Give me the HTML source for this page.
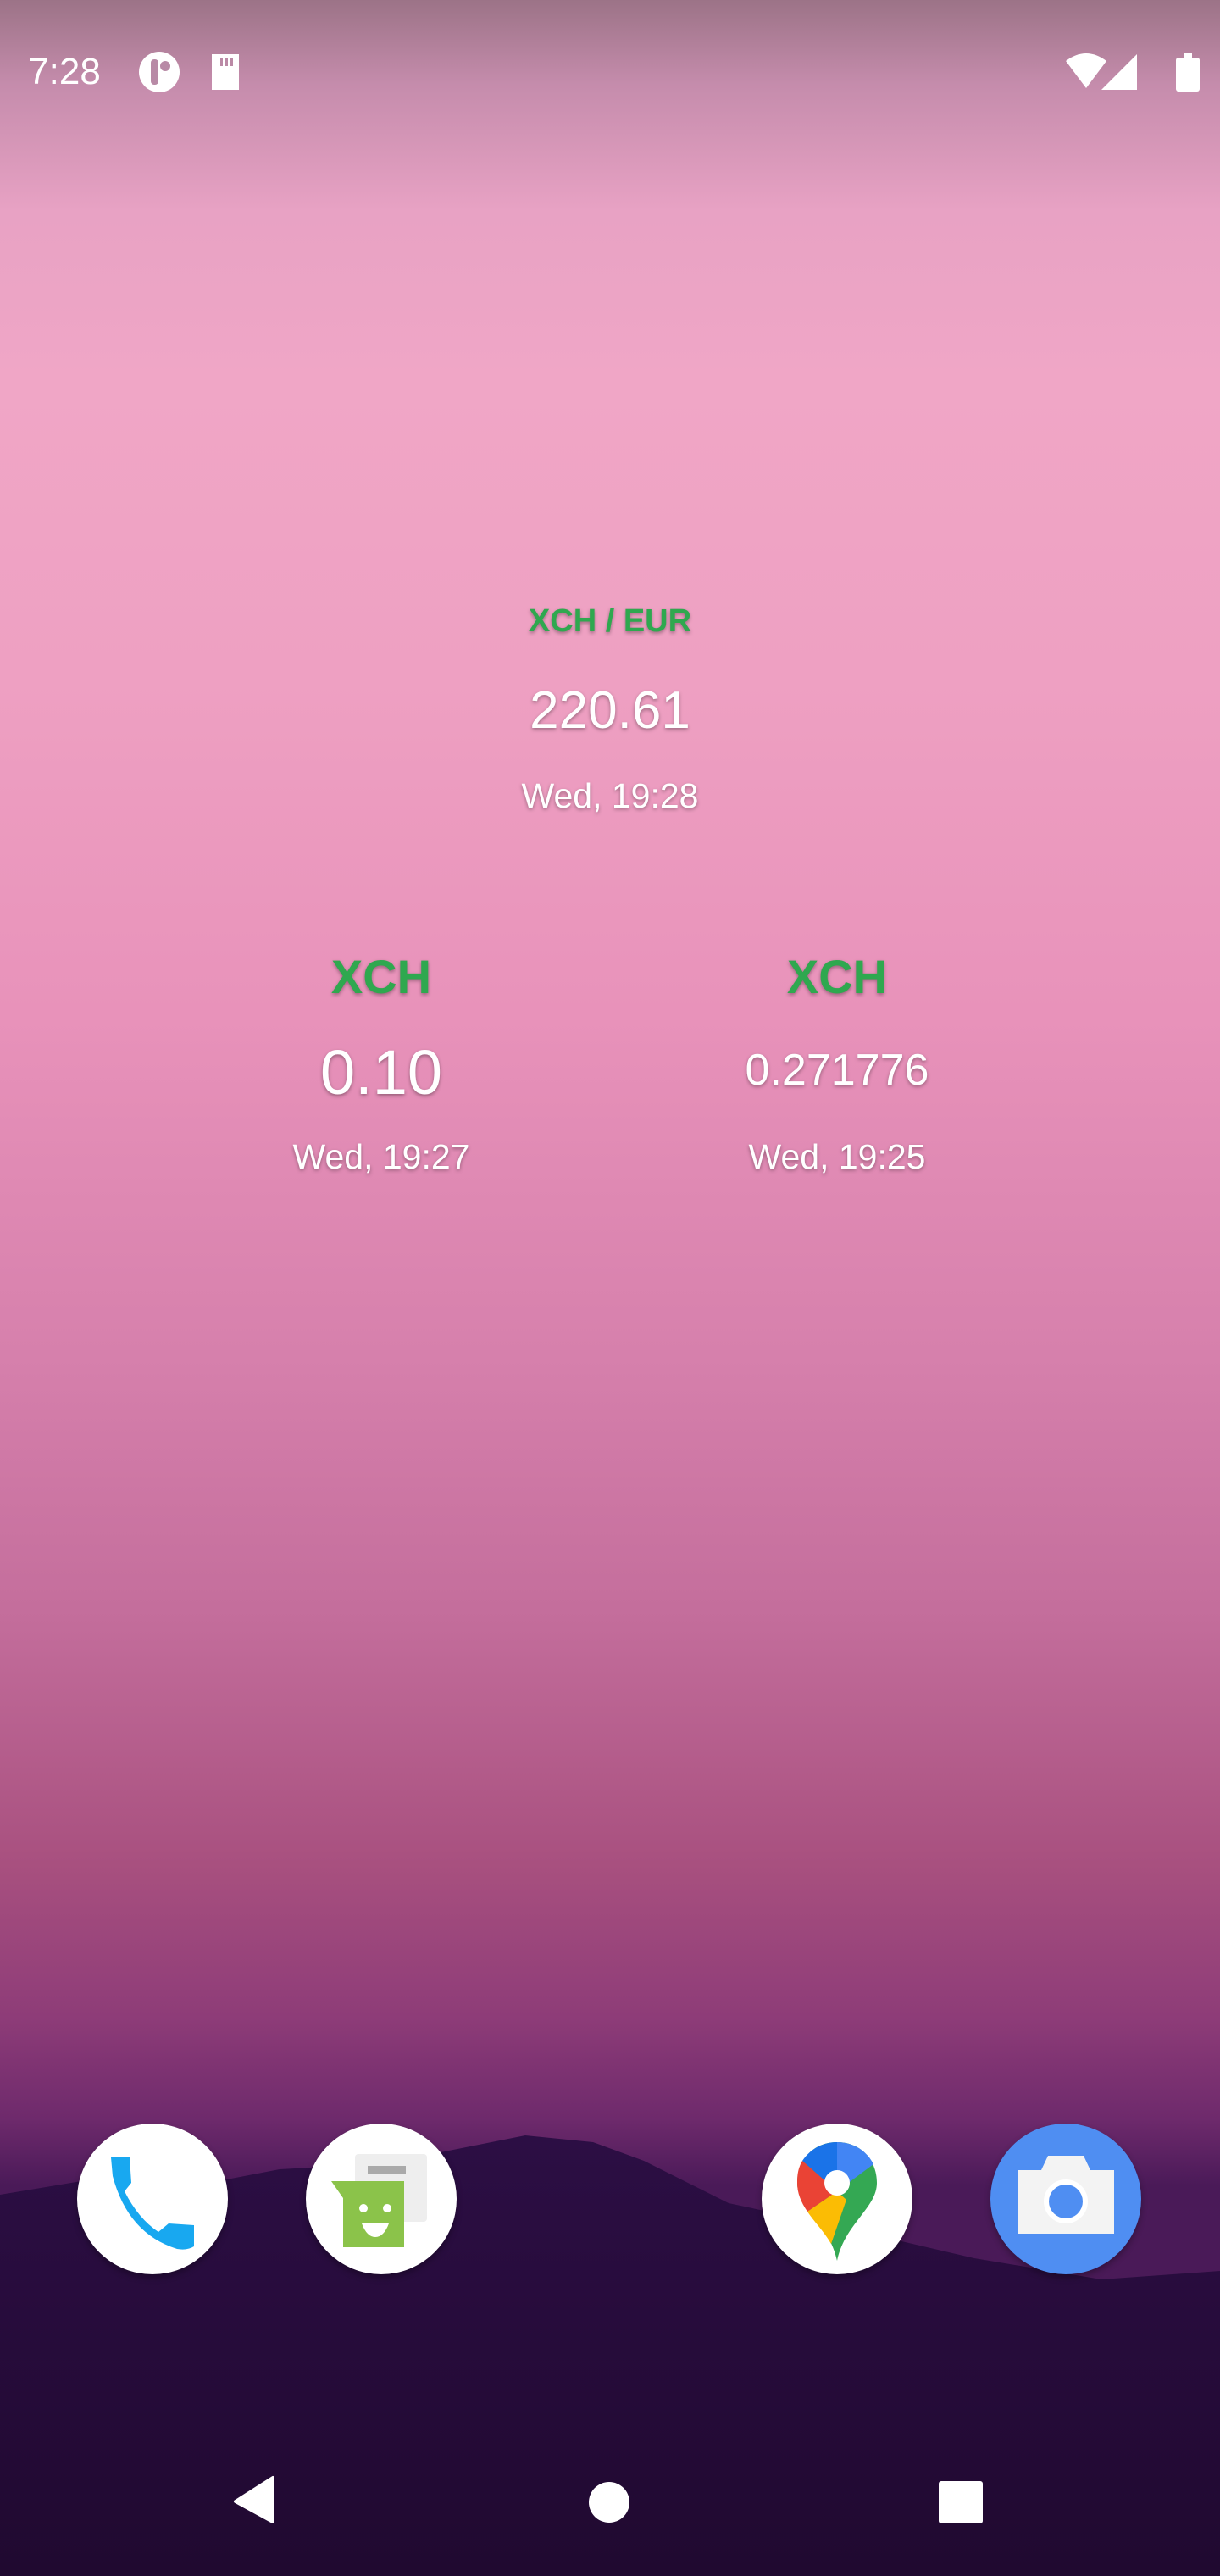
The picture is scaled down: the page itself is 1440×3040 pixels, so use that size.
<!DOCTYPE html>
<html><head><meta charset="utf-8"><style>
html,body{margin:0;padding:0}
body{width:1440px;height:3040px;position:relative;overflow:hidden;font-family:"Liberation Sans",sans-serif;
background:linear-gradient(180deg,#9c7387 0px,#c58cac 100px,#e8a2c4 250px,#f0a6c6 450px,#eea0c2 800px,#e892ba 1200px,#d680ac 1600px,#c46e9c 1900px,#a8507f 2200px,#8e3c78 2380px,#6e2a6c 2500px,#4a1a58 2580px)}
.t{position:absolute;transform:translateX(-50%);white-space:nowrap;text-align:center;color:#fff;text-shadow:0 2px 4px rgba(0,0,0,.35)}
.g{color:#2fa84f;font-weight:bold;text-shadow:0 2px 4px rgba(0,0,0,.35)}
.icon{position:absolute;width:178px;height:178px;border-radius:50%;background:#fff;box-shadow:0 4px 8px rgba(0,0,0,.3)}
</style></head><body>
<svg style="position:absolute;left:0;top:0" width="1440" height="3040">
<defs><linearGradient id="m" x1="0" y1="0" x2="0" y2="1" gradientUnits="userSpaceOnUse"><stop offset="0" stop-color="#2c0e44" x1="0" y1="2520"/><stop offset="1" stop-color="#210930"/></linearGradient>
<linearGradient id="m2" x1="0" y1="2520" x2="0" y2="3040" gradientUnits="userSpaceOnUse"><stop offset="0" stop-color="#2c0e44"/><stop offset="1" stop-color="#200930"/></linearGradient></defs>
<path d="M0 2590 L120 2570 L200 2585 L330 2560 L420 2555 L520 2540 L620 2520 L700 2528 L760 2550 L860 2600 L1000 2630 L1150 2665 L1300 2690 L1440 2680 L1440 3040 L0 3040Z" fill="url(#m2)"/>
</svg>
<div class="t" style="left:76px;top:60px;font-size:44px;text-shadow:none">7:28</div>
<svg style="position:absolute;left:162px;top:60px" width="120" height="50">
<circle cx="26" cy="25" r="24" fill="#fff"/><rect x="16" y="10" width="9" height="30" rx="4" fill="#b88aa6"/><circle cx="33" cy="18" r="6" fill="#b88aa6"/>
<path d="M88 4 H120 V46 H88 V16Z" fill="#fff"/><rect x="98" y="8" width="3" height="10" fill="#bb8aa6"/><rect x="104" y="8" width="3" height="10" fill="#bb8aa6"/><rect x="110" y="8" width="3" height="10" fill="#bb8aa6"/>
</svg>
<svg style="position:absolute;left:1250px;top:60px" width="170" height="50">
<path d="M8 12 Q32 -6 56 12 L32 44Z" fill="#fff"/>
<path d="M92 4 L92 46 L50 46Z" fill="#fff"/>
<rect x="138" y="8" width="28" height="40" rx="3" fill="#fff"/><rect x="147" y="2" width="10" height="8" fill="#fff"/>
</svg>
<div class="t g" style="left:720px;top:712px;font-size:38px">XCH / EUR</div>
<div class="t" style="left:720px;top:803px;font-size:62px">220.61</div>
<div class="t" style="left:720px;top:916px;font-size:41px">Wed, 19:28</div>
<div class="t g" style="left:450px;top:1120px;font-size:56px">XCH</div>
<div class="t" style="left:450px;top:1223px;font-size:74px">0.10</div>
<div class="t" style="left:450px;top:1342px;font-size:41px">Wed, 19:27</div>
<div class="t g" style="left:988px;top:1120px;font-size:56px">XCH</div>
<div class="t" style="left:988px;top:1233px;font-size:52px">0.271776</div>
<div class="t" style="left:988px;top:1342px;font-size:41px">Wed, 19:25</div>
<div class="icon" style="left:91px;top:2506px"><svg width="178" height="178"><path d="M40 40 H62 L64 70 L56 80 Q72 112 96 128 L108 118 L138 120 V145 Q130 150 118 148 Q60 130 42 62Z" fill="#18a8f0"/></svg></div>
<div class="icon" style="left:361px;top:2506px"><svg width="178" height="178"><rect x="58" y="36" width="85" height="80" rx="4" fill="#eee"/><rect x="73" y="50" width="45" height="10" fill="#aaa"/><path d="M30 68 H116 V146 H44 V88Z" fill="#8bc34a"/><circle cx="68" cy="100" r="5" fill="#fff"/><circle cx="96" cy="100" r="5" fill="#fff"/><path d="M66 118 H98 Q92 134 82 134 Q72 134 66 118Z" fill="#fff"/></svg></div>
<div class="icon" style="left:899px;top:2506px"><svg width="178" height="178"><path d="M89 22 C60 22 42 44 42 70 C42 100 80 118 89 162 C98 118 136 100 136 70 C136 44 118 22 89 22Z" fill="#34a853"/><path d="M89 22 C70 22 56 32 48 44 L89 80Z" fill="#1a73e8"/><path d="M48 44 C42 54 42 64 42 70 C42 82 46 92 54 104 L89 80Z" fill="#ea4335"/><path d="M54 104 C62 116 74 128 82 142 L100 90 L89 80Z" fill="#fbbc04"/><path d="M89 22 C108 22 124 32 132 48 L89 80Z" fill="#4285f4"/><circle cx="89" cy="70" r="15" fill="#fff"/></svg></div>
<div class="icon" style="left:1169px;top:2506px;background:#4f8ef2"><svg width="178" height="178"><path d="M68 38 H110 L118 55 H146 V130 H32 V55 H60Z" fill="#f3f3f3"/><circle cx="89" cy="92" r="26" fill="#fff"/><circle cx="89" cy="92" r="20" fill="#4f8ef2"/></svg></div>
<svg style="position:absolute;left:0;top:2900px" width="1440" height="110">
<path d="M322 24 L322 76 L278 52Z" fill="#fff" stroke="#fff" stroke-width="4" stroke-linejoin="round"/>
<circle cx="719" cy="53" r="24" fill="#fff"/>
<rect x="1108" y="28" width="52" height="50" rx="3" fill="#fff"/>
</svg>
</body></html>
